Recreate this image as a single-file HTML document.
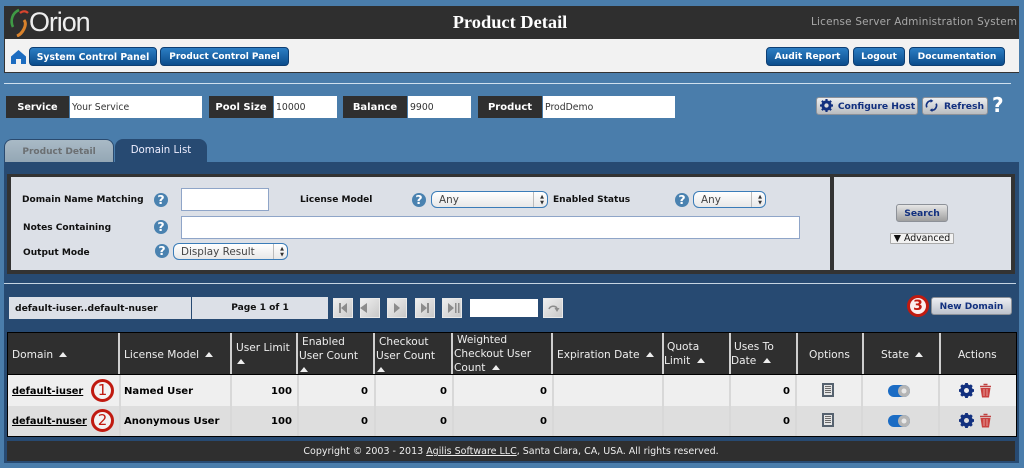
<!DOCTYPE html>
<html><head><meta charset="utf-8"><style>
html,body{margin:0;padding:0;width:1024px;height:468px;overflow:hidden;background:#4a7dab}
#r{position:absolute;left:0;top:0;width:1024px;height:468px;filter:blur(.35px);font-family:"DejaVu Sans",sans-serif;font-size:10px}
#r div,#r span.a,#r svg{position:absolute}
.t{white-space:nowrap;line-height:14px}
.b{font-weight:bold}
.nav{background:linear-gradient(#2c7ec4,#0b4d8c);border:1px solid #0e3f73;border-radius:4px;color:#fff;font-weight:bold;font-size:9.15px;text-align:center;height:17px;line-height:19px;top:47px;white-space:nowrap}
.lab{background:#2f2f2f;color:#fff;font-weight:bold;font-size:10px;text-align:center;height:22px;line-height:23px;top:96px}
.val{background:#fff;color:#333;font-size:9.3px;height:22px;line-height:24px;top:96px;padding-left:2px;box-sizing:border-box}
.gb{background:linear-gradient(#eceef0,#b9bcc0);border:1px solid #8d9198;border-radius:3px;color:#12307f;font-weight:bold;font-size:9.2px;text-align:center;white-space:nowrap;box-sizing:border-box}
.q{width:14px;height:14px;border-radius:50%;background:#4a82b0;color:#fff;font-weight:bold;font-size:12.5px;line-height:14px;text-align:center}
.f{color:#111;font-weight:bold;font-size:9.05px;white-space:nowrap;line-height:14px}
.inp{background:#fff;border:1.5px solid #8fa5c8;box-sizing:border-box}
.sel{background:linear-gradient(#fff,#e8e8e8);border:1px solid #3a7cb8;border-radius:6px;box-sizing:border-box;color:#444;font-size:10.4px;line-height:16px;padding-left:7px;height:17px}
.sel i{position:absolute;right:13px;top:0;bottom:0;border-left:1px solid #bbb;width:0}
.sel b{position:absolute;right:3px;top:1px;font-size:5px;line-height:6px;color:#333;font-weight:normal;text-align:center;padding-top:1px}
.pg{background:linear-gradient(135deg,#eee,#c9c9c9);border:1px solid #e9e9e9;box-sizing:border-box;top:298px;width:20px;height:20px}
.th{color:#eee;font-size:10.6px;line-height:14px;white-space:nowrap}
.th u{display:inline-block;width:0;height:0;border-left:4.5px solid transparent;border-right:4.5px solid transparent;border-bottom:5px solid #eee;text-decoration:none;vertical-align:1px;margin-left:3px}
.th u.z{margin-left:1px}
.v{background:#cfcfcf;width:2px}
.h{background:#d8d8d8;width:2px}
.c{color:#000;font-weight:bold;font-size:10.05px;white-space:nowrap;line-height:14px}
.circ{border:3px solid #c01a10;border-radius:50%;background:#f3f3f3;color:#c01a10;text-align:center;box-sizing:content-box}
</style></head><body><div id="r">
<div style="left:4px;top:6px;width:1015px;height:33px;background:#2f2f2f"></div>
<div style="left:4px;top:39px;width:1015px;height:34px;background:#f2f2f2;border-bottom:1px solid #333;border-left:1px solid #333;box-sizing:border-box"></div>
<svg style="left:8px;top:7px" width="22" height="30" viewBox="0 0 22 30"><path d="M11 3C4 6 2 14 5 20" fill="none" stroke="#3f9a45" stroke-width="2.6"/><path d="M12 6C15 3.500 18 4 20 6" fill="none" stroke="#d8452e" stroke-width="2.200"/><path d="M16 13C20 18 14 27 9 29" fill="none" stroke="#d9822b" stroke-width="3"/></svg>
<div class="t" style="left:29px;top:8px;font:27px/28px 'Liberation Sans',sans-serif;color:#eee;letter-spacing:-1.1px">Orion</div>
<div class="t" style="left:380px;width:260px;top:12px;text-align:center;font:bold 18.4px/20px 'Liberation Serif',serif;color:#fff">Product Detail</div>
<div class="t" style="left:811px;top:15px;font-size:10.4px;color:#a8a8a8;letter-spacing:.23px">License Server Administration System</div>
<svg style="left:11px;top:50px" width="15" height="14" viewBox="0 0 15 14"><path d="M7.500 0L15 6.500V14H10V9H5V14H0V6.500Z" fill="#1c6cc0"/></svg>
<div class="nav" style="left:29px;width:126px;font-size:9.3px">System Control Panel</div>
<div class="nav" style="left:160px;width:127px;font-size:8.95px">Product Control Panel</div>
<div class="nav" style="left:766px;width:81px">Audit Report</div>
<div class="nav" style="left:853px;width:50px">Logout</div>
<div class="nav" style="left:909px;width:94px">Documentation</div>
<div style="left:4px;top:83px;width:1007px;height:1px;background:#cfe0ee"></div>
<div class="lab" style="left:6px;width:63px;font-size:9.7px">Service</div><div class="val" style="left:70px;width:132px">Your Service</div>
<div class="lab" style="left:209px;width:64px">Pool Size</div><div class="val" style="left:274px;width:63px">10000</div>
<div class="lab" style="left:343px;width:64px">Balance</div><div class="val" style="left:408px;width:63px">9900</div>
<div class="lab" style="left:478px;width:64px">Product</div><div class="val" style="left:543px;width:132px">ProdDemo</div>
<div class="gb" style="left:816px;top:97px;width:102px;height:18px;line-height:18px;padding-left:19px">Configure Host</div>
<svg style="left:820px;top:99px" width="13" height="13" viewBox="0 0 24 24"><circle cx="12" cy="12" r="7" fill="none" stroke="#12307f" stroke-width="5"/><path d="M12 0v24M0 12h24M3.500 3.500l17 17M20.500 3.500l-17 17" stroke="#12307f" stroke-width="4"/><circle cx="12" cy="12" r="4" fill="#dcdcdc"/></svg>
<div class="gb" style="left:922px;top:97px;width:66px;height:18px;line-height:18px;padding-left:18px">Refresh</div>
<svg style="left:925px;top:99px" width="13" height="13" viewBox="0 0 14 14"><path d="M2 9A5 5 0 0 1 7 2" fill="none" stroke="#12307f" stroke-width="1.800"/><path d="M12 5A5 5 0 0 1 7 12" fill="none" stroke="#12307f" stroke-width="1.800"/><path d="M6 0l3 2-3 2zM8 10l-3 2 3 2z" fill="#12307f"/></svg>
<div class="t b" style="left:992px;top:95px;font-size:20px;line-height:20px;color:#fff">?</div>
<div style="left:4px;top:139px;width:110px;height:24px;background:linear-gradient(#a9bac6,#93a6b4);border:1px solid #2a4a6f;border-bottom:0;border-radius:8px 8px 0 0;box-sizing:border-box;color:#6b6f72;font-weight:bold;font-size:9.05px;text-align:center;line-height:24px">Product Detail</div>
<div style="left:115px;top:139px;width:92px;height:24px;background:#274a72;border-radius:8px 8px 0 0;color:#eef;font-size:10.2px;text-align:center;line-height:24px;white-space:nowrap">Domain List</div>
<div style="left:4px;top:162px;width:1015px;height:301px;background:#274a72"></div>
<div style="left:7px;top:174px;width:1008px;height:100px;background:#333"></div>
<div style="left:11px;top:177px;width:819px;height:93px;background:#dce0e7"></div>
<div style="left:834px;top:177px;width:177px;height:93px;background:#dce0e7"></div>
<div class="f" style="left:22px;top:193px">Domain Name Matching</div>
<div class="q" style="left:154px;top:193px">?</div>
<div class="inp" style="left:181px;top:188px;width:88px;height:23px"></div>
<div class="f" style="left:300px;top:193px">License Model</div>
<div class="q" style="left:412px;top:193px">?</div>
<div class="sel" style="left:431px;top:191px;width:117px">Any<i></i><b>▲<br>▼</b></div>
<div class="f" style="left:553px;top:193px">Enabled Status</div>
<div class="q" style="left:675px;top:193px">?</div>
<div class="sel" style="left:693px;top:191px;width:73px">Any<i></i><b>▲<br>▼</b></div>
<div class="f" style="left:23px;top:221px">Notes Containing</div>
<div class="q" style="left:154px;top:220px">?</div>
<div class="inp" style="left:181px;top:216px;width:619px;height:23px"></div>
<div class="f" style="left:23px;top:246px">Output Mode</div>
<div class="q" style="left:155px;top:244px">?</div>
<div class="sel" style="left:173px;top:243px;width:115px">Display Result<i></i><b>▲<br>▼</b></div>
<div class="gb" style="left:896px;top:204px;width:52px;height:18px;line-height:18px;background:linear-gradient(#e6e6e6,#9f9f9f)">Search</div>
<div style="left:890px;top:233px;width:64px;height:11px;background:#f2f2f2;border:1px solid #aaa;box-sizing:border-box;color:#111;font-size:9.4px;line-height:10px;text-align:center;white-space:nowrap;border-radius:1px">▼ Advanced</div>
<div style="left:4px;top:283px;width:1012px;height:1px;background:#c5d4e2"></div>
<div style="left:9px;top:297px;width:182px;height:22px;background:#dce0e7;color:#111;font-weight:bold;font-size:9.2px;line-height:23px;text-indent:6px;white-space:nowrap">default-iuser..default-nuser</div>
<div style="left:192px;top:297px;width:136px;height:22px;background:#dce0e7;color:#111;font-weight:bold;font-size:9.1px;line-height:23px;text-align:center">Page 1 of 1</div>
<div class="pg" style="left:333px"></div><div class="pg" style="left:360px"></div><div class="pg" style="left:387px"></div><div class="pg" style="left:415px"></div><div class="pg" style="left:442px"></div>
<svg style="left:333px;top:298px" width="132" height="20" viewBox="0 0 132 20" fill="#8c8c8c"><path d="M6 5h2v10H6zM14 5v10l-6-5zM27 10l7-5v10zM61 5l6 5-6 5zM88 5l6 5-6 5zM94 5h2v10h-2zM115 5l6 5-6 5zM122 5h1.500v10H122zM125 5h1.500v10H125z"/></svg>
<div style="left:470px;top:299px;width:68px;height:18px;background:#fff"></div>
<div class="pg" style="left:543px"></div>
<svg style="left:547px;top:302px" width="13" height="13" viewBox="0 0 13 13"><path d="M2 7A4.500 4 0 0 1 10 6" fill="none" stroke="#8c8c8c" stroke-width="1.500"/><path d="M7.500 6h5L10 10z" fill="#8c8c8c"/></svg>
<div class="gb" style="left:931px;top:297px;width:81px;height:18px;line-height:18px;font-size:9px;background:linear-gradient(#eceef2,#bcc2cc)">New Domain</div>
<div class="circ" style="left:907px;top:295px;width:16px;height:16px;line-height:16px;font-size:14px;font-weight:bold;background:#fbeeee">3</div>
<div style="left:7px;top:332px;width:1010px;height:105px;background:#000"></div>
<div style="left:8px;top:333px;width:1008px;height:41px;background:#2f2f2f"></div>
<div style="left:8px;top:375px;width:1008px;height:31px;background:#efefef"></div>
<div style="left:8px;top:406px;width:1008px;height:30px;background:#dedede"></div>
<div class="v" style="left:118px;top:333px;height:41px"></div><div class="v" style="left:230px;top:333px;height:41px"></div><div class="v" style="left:296px;top:333px;height:41px"></div><div class="v" style="left:373px;top:333px;height:41px"></div><div class="v" style="left:451px;top:333px;height:41px"></div><div class="v" style="left:551px;top:333px;height:41px"></div><div class="v" style="left:662px;top:333px;height:41px"></div><div class="v" style="left:729px;top:333px;height:41px"></div><div class="v" style="left:796px;top:333px;height:41px"></div><div class="v" style="left:862px;top:333px;height:41px"></div><div class="v" style="left:939px;top:333px;height:41px"></div>
<div class="h" style="left:119px;top:375px;height:61px"></div><div class="h" style="left:230px;top:375px;height:61px"></div><div class="h" style="left:297px;top:375px;height:61px"></div><div class="h" style="left:374px;top:375px;height:61px"></div><div class="h" style="left:452px;top:375px;height:61px"></div><div class="h" style="left:552px;top:375px;height:61px"></div><div class="h" style="left:662px;top:375px;height:61px"></div><div class="h" style="left:729px;top:375px;height:61px"></div><div class="h" style="left:795px;top:375px;height:61px"></div><div class="h" style="left:861px;top:375px;height:61px"></div><div class="h" style="left:938px;top:375px;height:61px"></div>
<div class="th" style="left:12px;top:348px">Domain <u></u></div>
<div class="th" style="left:124px;top:348px">License Model <u></u></div>
<div class="th" style="left:236px;top:341px">User Limit<br><u class="z"></u></div>
<div class="th" style="left:299px;top:335px"><span style="margin-left:3px">Enabled</span><br>User Count<br><u class="z"></u></div>
<div class="th" style="left:376px;top:335px"><span style="margin-left:3px">Checkout</span><br>User Count<br><u class="z"></u></div>
<div class="th" style="left:454px;top:333px"><span style="margin-left:3px">Weighted</span><br>Checkout User<br>Count <u></u></div>
<div class="th" style="left:557px;top:348px">Expiration Date <u></u></div>
<div class="th" style="left:664px;top:340px"><span style="margin-left:3px">Quota</span><br>Limit <u></u></div>
<div class="th" style="left:731px;top:340px"><span style="margin-left:3px">Uses To</span><br>Date <u></u></div>
<div class="th" style="left:809px;top:348px">Options</div>
<div class="th" style="left:881px;top:348px">State <u></u></div>
<div class="th" style="left:958px;top:348px">Actions</div>
<div class="c" style="left:12px;top:385px;text-decoration:underline;font-size:9.8px">default-iuser</div>
<div class="c" style="left:12px;top:415px;text-decoration:underline;font-size:9.8px">default-nuser</div>
<div class="c" style="left:124px;top:385px">Named User</div>
<div class="c" style="left:124px;top:415px">Anonymous User</div>
<div class="circ" style="left:91px;top:379px;width:17px;height:17px;line-height:17px;font-size:15px">1</div>
<div class="circ" style="left:91px;top:409px;width:17px;height:17px;line-height:17px;font-size:15px">2</div>
<div class="c" style="left:271px;top:385px">100</div><div class="c" style="left:271px;top:415px">100</div>
<div class="c" style="left:361px;top:385px">0</div><div class="c" style="left:361px;top:415px">0</div>
<div class="c" style="left:440px;top:385px">0</div><div class="c" style="left:440px;top:415px">0</div>
<div class="c" style="left:540px;top:385px">0</div><div class="c" style="left:540px;top:415px">0</div>
<div class="c" style="left:783px;top:385px">0</div><div class="c" style="left:783px;top:415px">0</div>
<svg style="left:822px;top:383px" width="12" height="14" viewBox="0 0 12 14"><rect x="1" y="1" width="10" height="12" fill="#e6e6e6" stroke="#56626f" stroke-width="2"/><path d="M3 3.500h6M3 5.500h6M3 7.500h6M3 9.500h6" stroke="#6a6a6a"/></svg>
<svg style="left:822px;top:413px" width="12" height="14" viewBox="0 0 12 14"><rect x="1" y="1" width="10" height="12" fill="#e6e6e6" stroke="#56626f" stroke-width="2"/><path d="M3 3.500h6M3 5.500h6M3 7.500h6M3 9.500h6" stroke="#6a6a6a"/></svg>
<svg style="left:888px;top:385px" width="22" height="12" viewBox="0 0 22 12"><rect width="22" height="12" rx="6" fill="#1b6cc4"/><circle cx="16" cy="6" r="6" fill="#b5b5b5"/><circle cx="16" cy="6" r="2.500" fill="#e8e8e8"/></svg>
<svg style="left:888px;top:415px" width="22" height="12" viewBox="0 0 22 12"><rect width="22" height="12" rx="6" fill="#1b6cc4"/><circle cx="16" cy="6" r="6" fill="#b5b5b5"/><circle cx="16" cy="6" r="2.500" fill="#e8e8e8"/></svg>
<svg style="left:959px;top:383px" width="15" height="15" viewBox="0 0 24 24"><circle cx="12" cy="12" r="7.500" fill="none" stroke="#12307f" stroke-width="5"/><path d="M12 0v24M0 12h24M3.500 3.500l17 17M20.500 3.500l-17 17" stroke="#12307f" stroke-width="4.500"/><circle cx="12" cy="12" r="4" fill="#efefef"/></svg>
<svg style="left:959px;top:413px" width="15" height="15" viewBox="0 0 24 24"><circle cx="12" cy="12" r="7.500" fill="none" stroke="#12307f" stroke-width="5"/><path d="M12 0v24M0 12h24M3.500 3.500l17 17M20.500 3.500l-17 17" stroke="#12307f" stroke-width="4.500"/><circle cx="12" cy="12" r="4" fill="#dedede"/></svg>
<svg style="left:979px;top:383px" width="13" height="15" viewBox="0 0 13 15"><path d="M4.500 1.500h4M1 3.500h11" stroke="#c0403f" stroke-width="1.500"/><path d="M1.500 5h10L10 14.500H3z" fill="#c9413f"/><path d="M5 6v7M8 6v7" stroke="#e59a9a"/></svg>
<svg style="left:979px;top:413px" width="13" height="15" viewBox="0 0 13 15"><path d="M4.500 1.500h4M1 3.500h11" stroke="#c0403f" stroke-width="1.500"/><path d="M1.500 5h10L10 14.500H3z" fill="#c9413f"/><path d="M5 6v7M8 6v7" stroke="#e59a9a"/></svg>
<div style="left:7px;top:441px;width:1008px;height:20px;background:#2f2f2f;color:#eee;font-size:9.5px;line-height:21px;text-align:center;white-space:nowrap">Copyright © 2003 - 2013 <span style="text-decoration:underline">Agilis Software LLC</span>, Santa Clara, CA, USA. All rights reserved.</div>
</div></body></html>
